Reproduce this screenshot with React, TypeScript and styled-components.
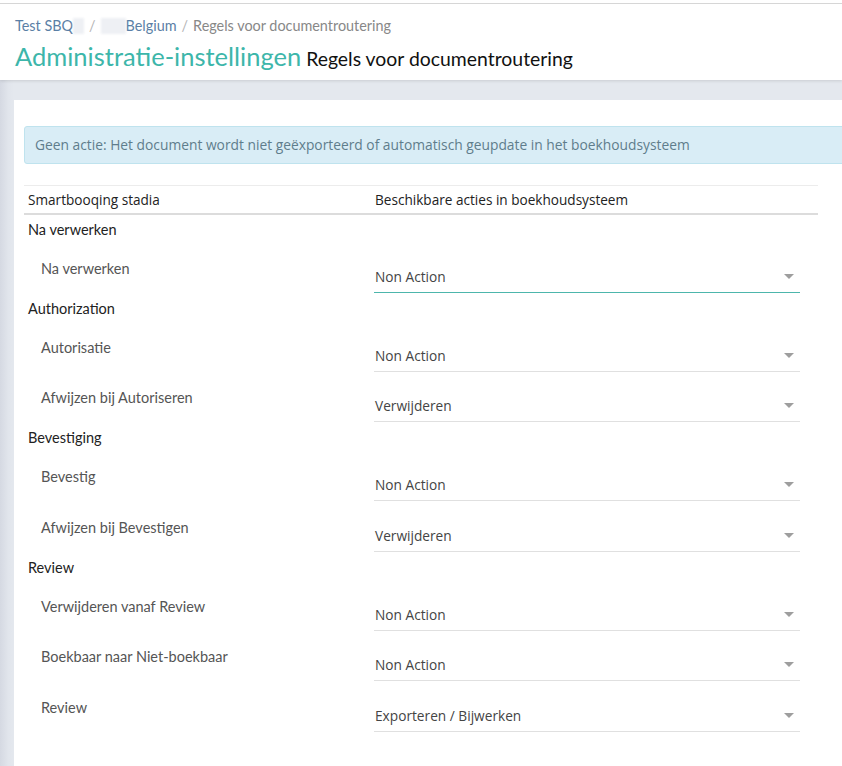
import styled, { createGlobalStyle } from 'styled-components'

const GlobalStyle = createGlobalStyle`
  html, body {
    margin: 0;
    padding: 0;
    background: #e4e8ee;
    overflow-x: hidden;
  }
  * { box-sizing: border-box; }
`

const geo = `Lato, "Open Sans", sans-serif`
const ui = `"Open Sans", "Noto Sans", sans-serif`

const Page = styled.div`
  min-height: 100vh;
  display: flex;
  flex-direction: column;
`

const Header = styled.header`
  background: #fff;
  border-top: 3px solid #fff;
  box-shadow: inset 0 1px 0 #d6d6d6, 0 1px 3px rgba(0, 0, 0, 0.12);
  padding: 13px 15px 9px;
  height: 80px;
  position: relative;
  z-index: 1;
`

const Breadcrumb = styled.nav`
  display: flex;
  align-items: center;
  font-family: ${geo};
  font-size: 14.4px;
  line-height: 20px;
  color: #888;
`

const Crumb = styled.a`
  color: #5b7fa6;
  text-decoration: none;
`

const Redacted = styled.span<{ w: number }>`
  display: inline-block;
  width: ${({ w }) => w}px;
  height: 16px;
  background: #eef0f4;
  filter: blur(1px);
`

const Sep = styled.span`
  color: #b5b5b5;
  margin: 0 5px;
`

const TitleRow = styled.div`
  display: flex;
  align-items: baseline;
  margin-top: 5px;
`

const Title = styled.h1`
  margin: 0;
  font-family: ${geo};
  font-weight: 400;
  font-size: 25.5px;
  line-height: 30px;
  color: #3db6aa;
`

const SubTitle = styled.span`
  margin-left: 5px;
  font-family: ${geo};
  font-size: 19.4px;
  color: #111;
`

const Body = styled.div`
  flex: 1;
  display: flex;
  padding-top: 20px;
`

const SideStrip = styled.div`
  width: 14px;
  margin-top: -20px;
  background: linear-gradient(90deg, #d5d9e2 0%, #e1e5ec 60%, #e4e8ee 100%);
`

const Card = styled.main`
  flex: 1;
  background: #fff;
  padding: 26px 0 40px 10px;
  overflow: hidden;
`

const Alert = styled.div`
  margin-right: -20px;
  padding: 9px 10px;
  background: #d9edf6;
  border: 1px solid #bfe3ee;
  border-radius: 3px;
  font-family: ${ui};
  font-size: 13.8px;
  line-height: 18px;
  color: #5f7d8c;
`

const Table = styled.div`
  width: 794px;
  margin-top: 21px;
  font-family: ${ui};
`

const HeadRow = styled.div`
  display: grid;
  grid-template-columns: 347px 1fr;
  border-top: 1px solid #ececec;
  border-bottom: 2px solid #dcdcdc;
  height: 30px;
  align-items: center;
  padding-left: 4px;
  font-size: 13.6px;
  color: #222;
`

const GroupRow = styled.div`
  height: 28.5px;
  display: flex;
  align-items: center;
  padding-left: 4px;
  font-family: ${geo};
  font-size: 14.5px;
  color: #222;
`

const StageRow = styled.div`
  height: 50.5px;
  display: grid;
  grid-template-columns: 350px 426px;
`

const StageLabel = styled.div`
  padding: 15px 0 0 17px;
  font-family: ${geo};
  font-size: 14.5px;
  line-height: 20px;
  color: #555;
`

const Select = styled.div<{ focused?: boolean }>`
  display: flex;
  align-items: center;
  justify-content: space-between;
  height: 34px;
  margin-top: 15px;
  padding: 2px 1px 0;
  border-bottom: 1px solid ${({ focused }) => (focused ? '#4db6ac' : '#e0e0e0')};
  font-size: 13.7px;
  color: #444;
`

const Caret = styled.span`
  width: 0;
  height: 0;
  margin-right: 5px;
  border-left: 5px solid transparent;
  border-right: 5px solid transparent;
  border-top: 5px solid #9e9e9e;
`

type Stage = { label: string; value: string; focused?: boolean }
type Group = { title: string; stages: Stage[] }

const groups: Group[] = [
  { title: 'Na verwerken', stages: [{ label: 'Na verwerken', value: 'Non Action', focused: true }] },
  {
    title: 'Authorization',
    stages: [
      { label: 'Autorisatie', value: 'Non Action' },
      { label: 'Afwijzen bij Autoriseren', value: 'Verwijderen' },
    ],
  },
  {
    title: 'Bevestiging',
    stages: [
      { label: 'Bevestig', value: 'Non Action' },
      { label: 'Afwijzen bij Bevestigen', value: 'Verwijderen' },
    ],
  },
  {
    title: 'Review',
    stages: [
      { label: 'Verwijderen vanaf Review', value: 'Non Action' },
      { label: 'Boekbaar naar Niet-boekbaar', value: 'Non Action' },
      { label: 'Review', value: 'Exporteren / Bijwerken' },
    ],
  },
]

export default function App() {
  return (
    <Page>
      <GlobalStyle />
      <Header>
        <Breadcrumb>
          <Crumb>Test SBQ</Crumb>
          <Redacted w={11} />
          <Sep>/</Sep>
          <Redacted w={25} />
          <Crumb>Belgium</Crumb>
          <Sep>/</Sep>
          <span>Regels voor documentroutering</span>
        </Breadcrumb>
        <TitleRow>
          <Title>Administratie-instellingen</Title>
          <SubTitle>Regels voor documentroutering</SubTitle>
        </TitleRow>
      </Header>
      <Body>
        <SideStrip />
        <Card>
          <Alert>
            Geen actie: Het document wordt niet geëxporteerd of automatisch geupdate in het boekhoudsysteem
          </Alert>
          <Table>
            <HeadRow>
              <span>Smartbooqing stadia</span>
              <span>Beschikbare acties in boekhoudsysteem</span>
            </HeadRow>
            {groups.map((g) => (
              <div key={g.title}>
                <GroupRow>{g.title}</GroupRow>
                {g.stages.map((s) => (
                  <StageRow key={s.label}>
                    <StageLabel>{s.label}</StageLabel>
                    <Select focused={s.focused}>
                      <span>{s.value}</span>
                      <Caret />
                    </Select>
                  </StageRow>
                ))}
              </div>
            ))}
          </Table>
        </Card>
      </Body>
    </Page>
  )
}
